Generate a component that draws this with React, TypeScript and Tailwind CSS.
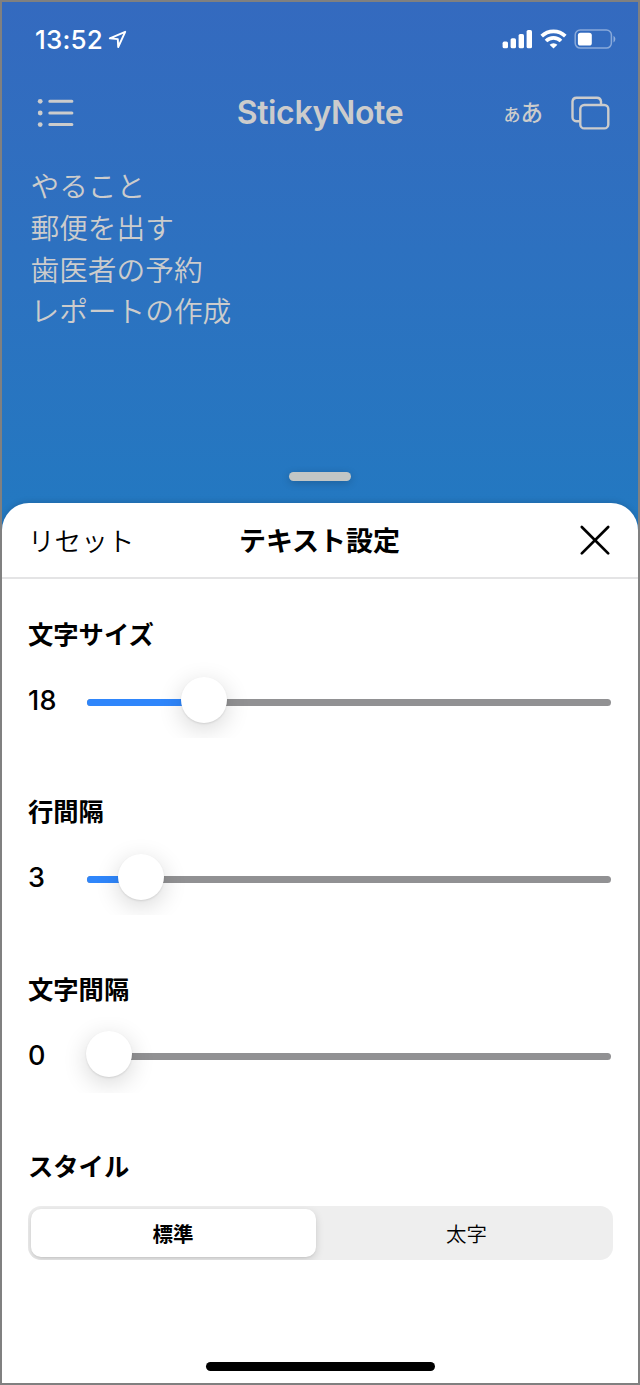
import React, {useState} from "react";

type SliderProps = {
	label: string;
	value: number;
	offset: number;
}

const StatusBar = () => {
	return (
		<div className="flex h-[74px] items-center justify-between pl-[33px] pr-[22px] text-white">
			<div className="flex items-center pt-px">
				<span className="text-[26px] leading-[32px] font-medium tracking-[0.2px]">13:52</span>
				<svg className="ml-[5px] h-[19px] w-[19px]" viewBox="0 0 19 19" fill="none" stroke="currentColor" strokeWidth="1.9" strokeLinejoin="round">
					<path d="M17.2 1.8 L1.8 8.3 L9.8 9.1 L10.2 17 Z"/>
				</svg>
			</div>
			<div className="flex items-center">
				<svg className="h-5 w-[31px]" viewBox="0 0 31 20" fill="currentColor">
					<rect x="0.6" y="12.6" width="5.4" height="6.7" rx="1.6"/>
					<rect x="8.6" y="9.2" width="5.4" height="10.1" rx="1.6"/>
					<rect x="16.6" y="5" width="5.4" height="14.3" rx="1.6"/>
					<rect x="24.6" y="1" width="5.4" height="18.3" rx="1.6"/>
				</svg>
				<svg className="ml-[7px] h-5 w-[27px]" viewBox="0 0 27 20" fill="none" stroke="currentColor" strokeWidth="3.7">
					<path d="M1.7 7.2 A17 17 0 0 1 25.3 7.2"/>
					<path d="M6 12 A10.8 10.8 0 0 1 21 12"/>
					<path d="M13.5 19.6 L9.6 15.8 A5.8 5.8 0 0 1 17.4 15.8 Z" fill="currentColor" stroke="none"/>
				</svg>
				<svg className="ml-[7px] h-5 w-[42px]" viewBox="0 0 42 20">
					<rect x="1.2" y="1.1" width="36.2" height="18" rx="5" fill="none" stroke="#fff" strokeOpacity="0.42" strokeWidth="1.5"/>
					<path d="M39.5 6.8 C41.9 8.2 41.9 12 39.5 13.4 Z" fill="#fff" fillOpacity="0.45"/>
					<rect x="3.9" y="3.8" width="13.9" height="12.7" rx="2.6" fill="#fff"/>
				</svg>
			</div>
		</div>
	)
}

const NavBar = () => {
	return (
		<div className="grid h-[74px] grid-cols-[1fr_auto_1fr] items-center px-[35px] text-[#cccccc]">
			<svg className="h-[30px] w-[37px]" viewBox="0 0 37 30" fill="none" stroke="currentColor" strokeWidth="3" strokeLinecap="round">
				<path d="M12.8 3.3 H34.9 M12.8 15 H34.9 M12.8 26.6 H34.9"/>
				<g fill="currentColor" stroke="none">
					<circle cx="3.2" cy="3.3" r="2.4"/>
					<circle cx="3.2" cy="15" r="2.4"/>
					<circle cx="3.2" cy="26.6" r="2.4"/>
				</g>
			</svg>
			<h1 className="text-[32px] leading-[40px] font-semibold tracking-[-0.35px]">StickyNote</h1>
			<div className="-mr-[7px] flex items-center justify-end">
				<div className="flex items-baseline pb-[2px] font-[Noto_Sans_CJK_JP,sans-serif] leading-[30px] font-medium">
					<span className="text-[17px]">あ</span>
					<span className="text-[22.5px]">あ</span>
				</div>
				<svg className="ml-[28px] h-[34px] w-[39px]" viewBox="0 0 39 34" fill="none" stroke="currentColor" strokeWidth="2.4">
					<path d="M9.3 25.3 H5.2 A4 4 0 0 1 1.5 21.3 V5.3 A4 4 0 0 1 5.5 1.7 H26 A4 4 0 0 1 30 5.3 V8.5"/>
					<rect x="9.3" y="9" width="28" height="23.4" rx="4"/>
				</svg>
			</div>
		</div>
	)
}

const Slider = ({label,value,offset}:SliderProps) => {
	return (
		<section>
			<h3 className="text-[25.3px] leading-[40px] font-bold">{label}</h3>
			<div className="mt-[9px] flex h-[76px] items-center overflow-hidden">
				<span className="w-[59px] pt-[2px] font-[Inter,sans-serif] text-[27px] leading-[32px] font-[450] tracking-[0.4px]">{value}</span>
				<div className="relative mt-[4px] h-[7px] w-[524px] rounded-full bg-[#919193]">
					<div className="h-full rounded-full bg-[#2f86fb]" style={{width: offset}}/>
					<div
						className="absolute top-[-22px] h-[46px] w-[46px] -translate-x-1/2 rounded-full bg-white shadow-[0_1px_2px_rgba(0,0,0,0.1),0_6px_24px_rgba(0,0,0,0.16)]"
						style={{left: offset}}
					/>
				</div>
			</div>
		</section>
	)
}

const App = () => {
	const [bold,setBold] = useState<boolean>(false)

	return (
		<div className="flex h-[1385px] w-[640px] flex-col overflow-hidden border-2 border-[#808080] bg-white font-[Inter,Noto_Sans_CJK_JP,sans-serif] text-black">
			<div className="flex h-[535px] shrink-0 flex-col bg-linear-to-b from-[#346abf] to-[#2279c1]">
				<StatusBar/>
				<NavBar/>
				<div className="mt-[14px] pl-[28.5px] font-[Noto_Sans_CJK_JP,sans-serif] text-[28.7px] leading-[41.8px] font-[350] text-[#cccccc]">
					<p>やること</p>
					<p>郵便を出す</p>
					<p>歯医者の予約</p>
					<p>レポートの作成</p>
				</div>
				<div className="mt-[140.6px] ml-[287px] h-[9px] w-[62px] rounded-full bg-[#c2c6c5] shadow-[0_2px_8px_rgba(0,0,0,0.2)]"/>
			</div>

			<div className="relative -mt-[34.4px] flex flex-1 flex-col rounded-t-[27px] bg-white shadow-[0_-1px_6px_rgba(0,0,0,0.14)]">
				<div className="grid h-[76.4px] grid-cols-[1fr_auto_1fr] items-center border-b-2 border-[#e4e4e5] pl-[26px] pr-[27px] font-[Noto_Sans_CJK_JP,sans-serif]">
					<button className="text-left text-[26.6px] leading-[40px] font-[350]">リセット</button>
					<h2 className="text-[27px] leading-[40px] font-bold">テキスト設定</h2>
					<button className="justify-self-end">
						<svg className="h-[32px] w-[32px]" viewBox="0 0 32 32" fill="none" stroke="currentColor" strokeWidth="2.7" strokeLinecap="round">
							<path d="M2.8 3 L29.2 29.4 M29.2 3 L2.8 29.4"/>
						</svg>
					</button>
				</div>

				<div className="flex flex-col gap-[52.4px] px-[26px] pt-[34px] font-[Noto_Sans_CJK_JP,sans-serif]">
					<Slider label="文字サイズ" value={18} offset={117}/>
					<Slider label="行間隔" value={3} offset={54}/>
					<Slider label="文字間隔" value={0} offset={21.5}/>
					<section>
						<h3 className="text-[25.3px] leading-[40px] font-bold">スタイル</h3>
						<div className="mt-[21px] flex h-[54px] w-[585px] overflow-hidden rounded-[13px] bg-[#eeeeee] p-[3px] text-[20.5px]">
							<button
								className="w-[285px] rounded-[10px] bg-white pr-px font-bold shadow-[0_3px_8px_rgba(0,0,0,0.14),0_1px_2px_rgba(0,0,0,0.06)]"
								onClick={()=>setBold(false)}
								aria-pressed={!bold}
							>標準</button>
							<button
								className="flex-1 pl-[7px] font-[350]"
								onClick={()=>setBold(true)}
								aria-pressed={bold}
							>太字</button>
						</div>
					</section>
				</div>
				<div className="mt-auto mb-[12px] h-[9px] w-[229px] self-center rounded-full bg-black"/>
			</div>
		</div>
	);
};

export default App;
